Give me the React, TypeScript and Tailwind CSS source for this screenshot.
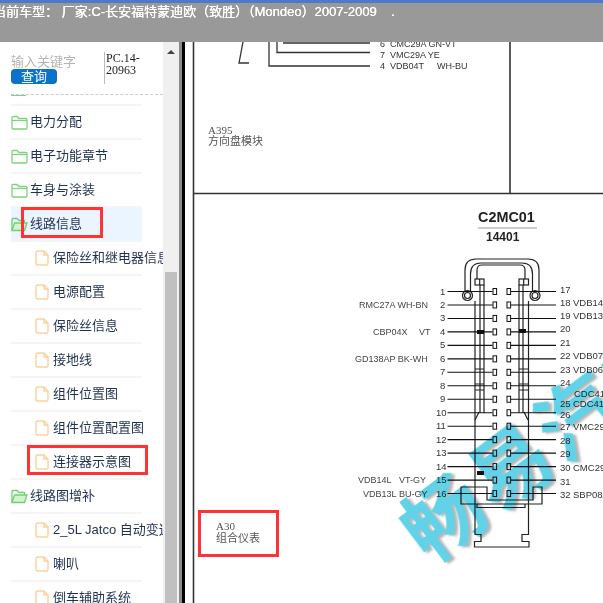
const cjk = "font-['Liberation_Sans','Noto_Sans_CJK_SC',sans-serif]";

type Row = { label: string; kind: "folder" | "open" | "file"; active?: boolean };

const rows: Row[] = [
  { label: "电力分配", kind: "folder" },
  { label: "电子功能章节", kind: "folder" },
  { label: "车身与涂装", kind: "folder" },
  { label: "线路信息", kind: "open", active: true },
  { label: "保险丝和继电器信息", kind: "file" },
  { label: "电源配置", kind: "file" },
  { label: "保险丝信息", kind: "file" },
  { label: "接地线", kind: "file" },
  { label: "组件位置图", kind: "file" },
  { label: "组件位置配置图", kind: "file" },
  { label: "连接器示意图", kind: "file" },
  { label: "线路图增补", kind: "open" },
  { label: "2_5L Jatco 自动变速器", kind: "file" },
  { label: "喇叭", kind: "file" },
  { label: "倒车辅助系统", kind: "file" },
];

function FolderIcon() {
  return (
    <svg width="17" height="15" viewBox="0 0 17 15" fill="none" stroke="#7dd47d" strokeWidth="1.3" className="shrink-0">
      <path d="M1 13V2.5Q1 1.5 2 1.5H6L8 3.5H15Q16 3.5 16 4.5V13Q16 14 15 14H2Q1 14 1 13Z" />
      <path d="M1 5.5H16" />
    </svg>
  );
}

function OpenFolderIcon() {
  return (
    <svg width="17" height="15" viewBox="0 0 17 15" fill="none" stroke="#6fcf6f" strokeWidth="1.3" className="shrink-0">
      <path d="M1 13V2.5Q1 1.5 2 1.5H6L8 3.5H13.5V6" />
      <path d="M1 13.5L3.5 6H16L13.5 13.5Z" fill="#d3f2d3" />
    </svg>
  );
}

function FileIcon() {
  return (
    <svg width="14" height="16" viewBox="0 0 14 16" fill="none" stroke="#fdd09b" strokeWidth="1.4" className="shrink-0">
      <path d="M2.5 1H9L13 5V13.5Q13 15 11.5 15H2.5Q1 15 1 13.5V2.5Q1 1 2.5 1Z" />
      <path d="M9 1V5H13" />
    </svg>
  );
}

function TreeRow({ row }: { row: Row }) {
  const isFile = row.kind === "file";
  return (
    <div
      className={`flex h-[34px] w-[131px] items-center border-b-2 border-[#f5f5f5] text-[13px] whitespace-nowrap text-[#1f3050] ${
        row.active ? "bg-[#eaf5ff]" : ""
      } ${isFile ? "gap-[4px] pl-[24px]" : "gap-[2px]"}`}
    >
      {row.kind === "folder" && <FolderIcon />}
      {row.kind === "open" && <OpenFolderIcon />}
      {isFile && <FileIcon />}
      <span>{row.label}</span>
    </div>
  );
}

function Sidebar() {
  return (
    <div className={`flex h-full w-[179px] shrink-0 ${cjk}`}>
      <div className="w-[163px] overflow-hidden bg-white pl-[11px]">
        <div className="flex h-[52px] items-start pt-[10px]">
          <div className="mt-[2px] w-[93px]">
            <div className="text-[13px] leading-[15px] text-[#b5b5b5]">输入关键字</div>
            <div className="flex h-[15px] w-[46px] items-center justify-center rounded-[4px] bg-[#0a73c9] text-[13px] text-white">
              查询
            </div>
          </div>
          <div className="h-[32px] w-[50px] border-l border-[#bbb] pl-px font-['Liberation_Serif',serif] text-[12px] leading-[12px] text-[#222]">
            PC.14-20963
          </div>
        </div>
        <div className="h-px border-t border-dashed border-[#ccc]" />
        <div className="h-[11px] w-[131px] border-b-2 border-[#f5f5f5]">
          <div className="h-px w-[15px] bg-[#7dd47d]" />
        </div>
        {rows.map((r) => (
          <TreeRow key={r.label} row={r} />
        ))}
      </div>
      <div className="flex w-[16px] flex-col items-center bg-[#f0f0f0] px-[2px]">
        <div className="mt-[8px] h-0 w-0 border-x-[4px] border-b-[4px] border-x-transparent border-b-[#444]" />
        <div className="mt-[218px] w-full flex-1 bg-[#c0c0c0]" />
      </div>
    </div>
  );
}

const leftLabels: Record<number, [string, number][]> = {
  2: [["RMC27A WH-BN", 359]],
  4: [["CBP04X", 373], ["VT", 419]],
  6: [["GD138AP BK-WH", 355]],
  15: [["VDB14L", 358], ["VT-GY", 399]],
  16: [["VDB13L", 363], ["BU-GY", 399]],
};

const rightLabels: Record<number, string> = {
  18: "VDB143",
  19: "VDB132",
  22: "VDB07A",
  23: "VDB06A",
  25: "CDC410",
  27: "VMC29A",
  30: "CMC29A",
  32: "SBP08A",
};

const rightY = [289.5, 303, 316, 329, 342.5, 356, 369.5, 383, 404, 414.5, 427, 440.5, 454, 468, 481.5, 494.5];

function Diagram() {
  const pins = Array.from({ length: 16 }, (_, i) => i);
  const y = (i: number) => 291.5 + i * 13.47;
  return (
    <svg
      viewBox="179 42 424 561"
      className="h-full w-full blur-[0.45px]"
      fontFamily="'Liberation Sans','Noto Sans CJK SC',sans-serif"
      fill="#333"
    >
      <rect x="179" y="42" width="3" height="561" fill="#8a8a8a" />
      <rect x="182" y="42" width="3" height="561" fill="#000" />
      <g stroke="#333" fill="none">
        <path d="M193.5 42V603" strokeWidth="1.6" />
        <path d="M193.5 193.5H603" strokeWidth="1.6" />
        <path d="M510 42V193" strokeWidth="1.6" />
        <path d="M283 43H370M277 42V52.5H370M269 42V66H370M243 42L239 63H249" strokeWidth="1.3" />
      </g>
      <g fontSize="9" fill="#333">
        <text x="380" y="47">6</text>
        <text x="390" y="47">CMC29A GN-VT</text>
        <text x="380" y="58">7</text>
        <text x="390" y="58">VMC29A YE</text>
        <text x="380" y="69">4</text>
        <text x="390" y="69">VDB04T</text>
        <text x="437" y="69">WH-BU</text>
      </g>
      <g fontSize="11" fill="#555">
        <text x="208" y="134" fontFamily="'Liberation Serif',serif">A395</text>
        <text x="208" y="145">方向盘模块</text>
        <text x="216" y="530" fontFamily="'Liberation Serif',serif">A30</text>
        <text x="216" y="542">组合仪表</text>
      </g>
      <text x="478" y="222" fontSize="14.4" fontWeight="bold" fill="#222">C2MC01</text>
      <path d="M478 228H537" stroke="#999" />
      <text x="486" y="241" fontSize="12" fontWeight="bold" fill="#222">14401</text>

      {/* connector outline */}
      <g stroke="#222" fill="none" strokeWidth="1.2">
        <path d="M465 292V270Q465 259 476 259H528Q539 259 539 270V292" />
        <path d="M470.5 291V274Q470.5 263 481 263H522Q532.5 263 532.5 274V291" />
        <path d="M477 279V270Q477 265 482 265H520Q525 265 525 270V279" />
        <circle cx="467.5" cy="295.5" r="5" />
        <circle cx="467.5" cy="295.5" r="3" />
        <circle cx="535" cy="295.5" r="5" />
        <circle cx="535" cy="295.5" r="3" />
        <rect x="475" y="279" width="9" height="6" />
        <path d="M479.7 279V285" />
        <rect x="519" y="279" width="9.5" height="6" />
        <path d="M523.7 279V285" />
        <path d="M475 301V534.5H481V541.5H474.5V547H529V541.5H522V534.5H528.5V301" />
        <path d="M480 285V413M484 285V413M519 285V413M523 285V413" />
        <path d="M475 369H484M475 384H484M475 390H484M519 369H528M519 384H528M519 390H528" />
        <path d="M475 420L479 412M528 420L524 412" />
        <path d="M461 487H487V500H533V487H542V504H461Z" />
        <path d="M477 504V507.5H525V504" />
      </g>
      <rect x="477" y="330" width="7" height="4" fill="#111" />
      <rect x="519" y="329" width="7" height="4" fill="#111" />
      <rect x="477" y="471" width="7" height="4" fill="#111" />

      {pins.map((i) => (
        <g key={i}>
          <text x={i < 9 ? 440 : 436} y={y(i) + 3} fontSize="9.5" fill="#333">{i + 1}</text>
          <path d={`M447.5 ${y(i)}H492.5M511 ${y(i)}H556`} stroke="#111" strokeWidth="1.1" />
          <rect x="493" y={y(i) - 3} width="3.6" height="6" fill="white" stroke="#111" />
          <rect x="507" y={y(i) - 3} width="3.6" height="6" fill="white" stroke="#111" />
          {(leftLabels[i + 1] ?? []).map(([text, x]) => (
            <text key={text} x={x} y={y(i) + 3} fontSize="9" fill="#444">{text}</text>
          ))}
          <text x="560" y={rightY[i] + 3} fontSize="9.5" fill="#333">{i + 17}</text>
          {rightLabels[i + 17] && (
            <text x="573" y={rightY[i] + 3} fontSize="9.5" fill="#333">{rightLabels[i + 17]}</text>
          )}
        </g>
      ))}
      <text x="574" y="397" fontSize="9.5" fill="#333">CDC41</text>
    </svg>
  );
}

export default function App() {
  return (
    <div className={`relative h-[603px] w-[603px] overflow-hidden bg-white ${cjk}`}>
      <div className="h-[42px] overflow-hidden border-t-[3px] border-[#4d78cc] bg-[#999] pt-px">
        <div className="-ml-[7px] whitespace-pre text-[13px] leading-[15px] text-white [text-shadow:0.3px_0_0_white]">
          当前车型： 厂家:C-长安福特蒙迪欧（致胜）（Mondeo）2007-2009    .
        </div>
      </div>
      <div className="flex h-[561px]">
        <Sidebar />
        <div className="flex-1 overflow-hidden">
          <Diagram />
        </div>
      </div>

      {/* watermark */}
      <div className="pointer-events-none absolute left-[432px] top-[489px] origin-bottom-left -rotate-[37deg] whitespace-nowrap text-[80px] leading-none font-bold tracking-[4px] text-[#62d2e8] mix-blend-multiply [font-family:'Noto_Sans_CJK_SC',sans-serif] drop-shadow-[2px_3px_1px_rgba(110,110,110,0.5)]">
        畅易汽车
      </div>

      {/* red annotations */}
      <div className="absolute left-[21px] top-[207px] h-[31px] w-[82px] border-[3px] border-[#f33]" />
      <div className="absolute left-[27px] top-[445px] h-[30px] w-[121px] border-[3px] border-[#f33]" />
      <div className="absolute left-[198px] top-[510px] h-[47px] w-[81px] border-[3px] border-[#f33]" />
    </div>
  );
}
